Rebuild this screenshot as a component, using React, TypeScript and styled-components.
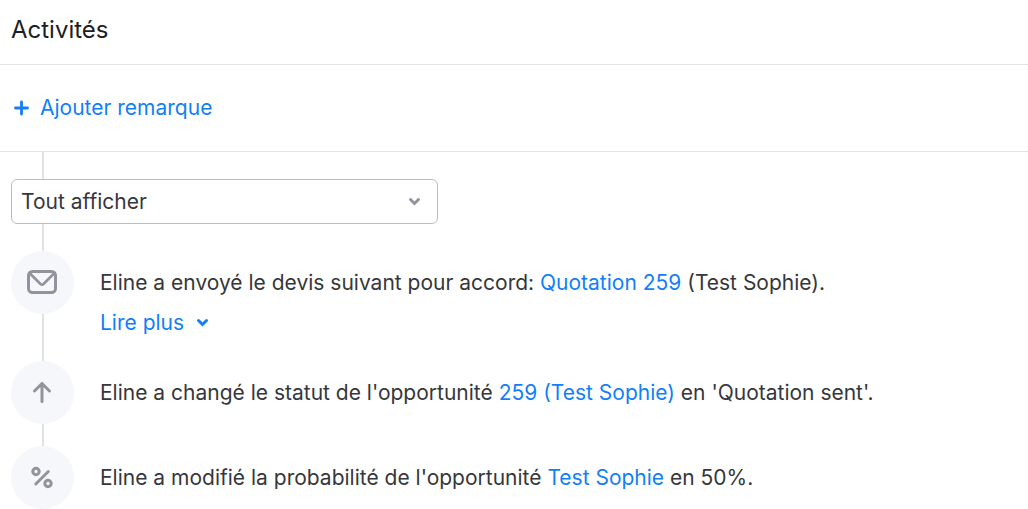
import React from "react";
import styled, { createGlobalStyle } from "styled-components";

const GlobalStyle = createGlobalStyle`
  *, *::before, *::after { box-sizing: border-box; }
  body {
    margin: 0;
    background: #fff;
    color: #36373b;
    font-family: Inter, "Liberation Sans", sans-serif;
    font-size: 21px;
    font-weight: 400;
    line-height: 24px;
  }
`;

const Header = styled.header`
  padding: 14px 11px 18px;
  border-bottom: 1px solid #e1e2e3;
`;

const Title = styled.h2`
  margin: 0;
  color: #1d1e22;
  font-size: 24px;
  font-weight: 400;
  line-height: 32px;
`;

const Toolbar = styled.div`
  display: flex;
  padding: 31px 11px;
  border-bottom: 1px solid #e1e2e3;
`;

const TextButton = styled.button`
  display: inline-flex;
  align-items: center;
  gap: 9px;
  padding: 0;
  border: 0;
  background: none;
  color: #127ff8;
  font: inherit;
  cursor: pointer;
`;

const Timeline = styled.section`
  padding: 27px 11px 0;
  background: linear-gradient(#e1e2e3, #e1e2e3) 42px 0 / 2px 100% no-repeat;
`;

const SelectBox = styled.div`
  position: relative;
  max-width: 427px;
`;

const Select = styled.select`
  display: block;
  width: 100%;
  height: 45px;
  padding: 0 40px 0 9px;
  appearance: none;
  border: 1px solid #bcbdbf;
  border-radius: 6px;
  background: #fff;
  color: inherit;
  font: inherit;
`;

const SelectArrow = styled.span`
  position: absolute;
  top: 0;
  right: 15px;
  height: 100%;
  display: flex;
  align-items: center;
  color: #92939c;
  pointer-events: none;
`;

const List = styled.ul`
  display: flex;
  flex-direction: column;
  gap: 22px;
  margin: 27px 0 0;
  padding: 0;
  list-style: none;
`;

const Item = styled.li`
  display: flex;
  align-items: flex-start;
  gap: 26px;
`;

const Badge = styled.span`
  display: flex;
  flex: none;
  align-items: center;
  justify-content: center;
  width: 63px;
  height: 63px;
  border-radius: 50%;
  background: #f6f7fa;
  color: #92939c;
`;

const Content = styled.div`
  display: flex;
  flex-direction: column;
  align-items: flex-start;
  gap: 16px;
  padding: 20px 0 4px;
`;

const Message = styled.p`
  margin: 0;
`;

const Link = styled.a`
  color: #127ff8;
  text-decoration: none;
`;

const PlusIcon = () => (
  <svg width="20" height="20" viewBox="0 0 20 20" fill="none" stroke="currentColor" strokeWidth="2.8" strokeLinecap="round" aria-hidden="true">
    <path d="M10.5 4v12M4.5 10h12" />
  </svg>
);

const ChevronIcon = () => (
  <svg width="18" height="14" viewBox="0 0 18 14" fill="none" stroke="currentColor" strokeWidth="3" strokeLinecap="round" aria-hidden="true">
    <path d="M5.5 4.5l4 4 4-4" />
  </svg>
);

const MailIcon = () => (
  <svg width="31" height="25" viewBox="0 0 31 25" fill="none" stroke="currentColor" strokeWidth="3" strokeLinecap="round" strokeLinejoin="round" aria-hidden="true">
    <rect x="1.5" y="1.5" width="27" height="21" rx="4" />
    <path d="M2.5 3l11 11q1.5 1.3 3 0l11-11" strokeWidth="2.6" />
  </svg>
);

const ArrowIcon = () => (
  <svg width="31" height="25" viewBox="0 0 31 25" fill="none" stroke="currentColor" strokeWidth="3" strokeLinecap="round" aria-hidden="true">
    <path d="M15 21.5V3.5M7.5 11L15 3.5l7.5 7.5" />
  </svg>
);

const PercentIcon = () => (
  <svg width="31" height="25" viewBox="0 0 31 25" fill="none" stroke="currentColor" strokeWidth="3" strokeLinecap="round" aria-hidden="true">
    <circle cx="9" cy="6.5" r="3.2" />
    <circle cx="21" cy="18.5" r="3.2" />
    <path d="M21.3 6.5L8.8 19" />
  </svg>
);

export default function App() {
  return (
    <main>
      <GlobalStyle />
      <Header>
        <Title>Activités</Title>
      </Header>
      <Toolbar>
        <TextButton type="button">
          <PlusIcon />
          Ajouter remarque
        </TextButton>
      </Toolbar>
      <Timeline>
        <SelectBox>
          <Select aria-label="Filtrer les activités" defaultValue="all">
            <option value="all">Tout afficher</option>
          </Select>
          <SelectArrow>
            <ChevronIcon />
          </SelectArrow>
        </SelectBox>
        <List>
          <Item>
            <Badge><MailIcon /></Badge>
            <Content>
              <Message>
                Eline a envoyé le devis suivant pour accord: <Link href="#devis">Quotation 259</Link> (Test Sophie).
              </Message>
              <TextButton type="button">
                Lire plus
                <ChevronIcon />
              </TextButton>
            </Content>
          </Item>
          <Item>
            <Badge><ArrowIcon /></Badge>
            <Content>
              <Message>
                Eline a changé le statut de l'opportunité <Link href="#opportunite">259 (Test Sophie)</Link> en 'Quotation sent'.
              </Message>
            </Content>
          </Item>
          <Item>
            <Badge><PercentIcon /></Badge>
            <Content>
              <Message>
                Eline a modifié la probabilité de l'opportunité <Link href="#opportunite">Test Sophie</Link> en 50%.
              </Message>
            </Content>
          </Item>
        </List>
      </Timeline>
    </main>
  );
}
